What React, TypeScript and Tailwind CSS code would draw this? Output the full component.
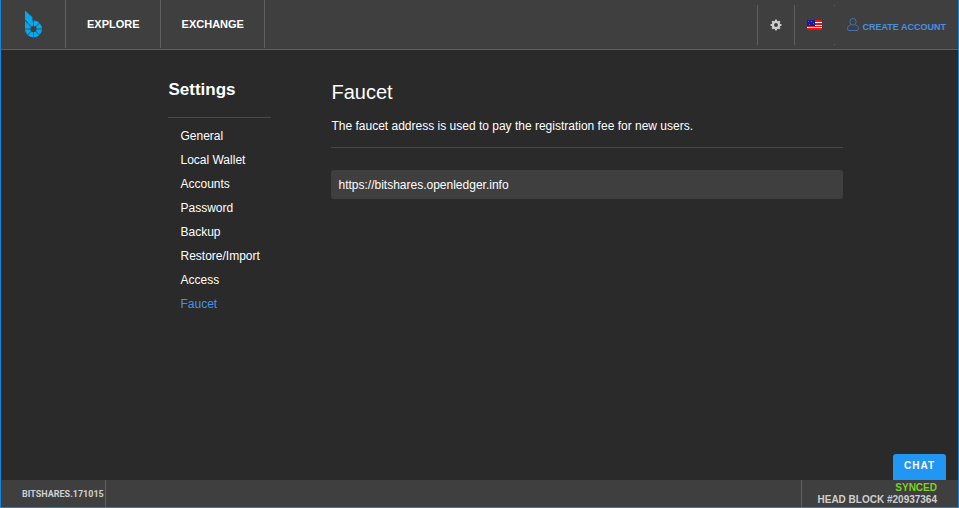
const FONT = 'font-["Liberation_Sans",Arial,sans-serif]';

const MENU = ["General", "Local Wallet", "Accounts", "Password", "Backup", "Restore/Import", "Access", "Faucet"];

function Logo() {
  const cuts = Array.from({ length: 8 }, (_, i) => i * 45);
  return (
    <svg width="19" height="28" viewBox="0 0 19 28" role="img" aria-label="BitShares">
      <path d="M1 0.5 L8.4 7.2 V12.5 L6.2 14 L1 9.8 Z" fill="#00a9f0" />
      <path d="M1 11 L5.5 14.7 L4.2 18 H1 Z" fill="#00a9f0" />
      <circle cx="9.5" cy="19" r="5.8" fill="none" stroke="#00a9f0" strokeWidth="5.4" />
      {cuts.map((a) => (
        <line key={a} x1="9.5" y1="19" x2="9.5" y2="10.2" stroke="#3f3f3f" strokeWidth="0.8" transform={`rotate(${a} 9.5 19)`} />
      ))}
    </svg>
  );
}

function Gear() {
  const teeth = Array.from({ length: 8 }, (_, i) => i * 45);
  return (
    <svg width="12" height="12" viewBox="0 0 12 12" aria-hidden="true">
      <circle cx="6" cy="6" r="3.1" fill="none" stroke="#d0d0d0" strokeWidth="2.3" />
      {teeth.map((a) => (
        <rect key={a} x="5" y="0.6" width="2" height="2" fill="#d0d0d0" transform={`rotate(${a} 6 6)`} />
      ))}
    </svg>
  );
}

function Flag() {
  return (
    <svg width="15" height="10" viewBox="0 0 15 10" shapeRendering="crispEdges" aria-hidden="true">
      <rect width="15" height="10" fill="#fff" />
      <rect width="15" height="2" fill="#fb0b0b" />
      <rect y="3" width="15" height="2" fill="#fb0b0b" />
      <rect y="6" width="15" height="1" fill="#fb0b0b" />
      <rect y="8" width="15" height="2" fill="#fb0b0b" />
      <rect width="8" height="6" fill="#1b1b9a" />
      <path d="M1 1h1v1h-1z M4 1h1v1h-1z M6 3h1v1h-1z M2 4h1v1h-1z" fill="#6262c0" />
    </svg>
  );
}

function Person() {
  return (
    <svg width="12" height="13" viewBox="0 0 12 13" fill="none" stroke="#3e74b4" strokeWidth="1" aria-hidden="true">
      <rect x="3" y="0.5" width="6" height="6.5" rx="2.8" />
      <path d="M3.7 7 C1.5 7.5 0.5 8.5 0.5 10.5 Q0.5 12.5 2 12.5 H10 Q11.5 12.5 11.5 10.5 C11.5 8.5 10.5 7.5 8.3 7" />
    </svg>
  );
}

export default function App() {
  return (
    <div className={`flex min-h-screen flex-col border-x border-b border-[#1784dc] bg-[#2a2a2a] text-xs text-white ${FONT}`}>
      <header className="flex h-[50px] justify-between border-b border-[#606060] bg-[#3f3f3f]">
        <nav className="flex h-12 text-[11px] font-bold">
          <a href="#home" className="flex w-[65px] items-center justify-center border-r border-[#606060]">
            <Logo />
          </a>
          <a href="#explore" className="flex items-center border-r border-[#606060] pr-5 pl-[21px]">EXPLORE</a>
          <a href="#exchange" className="flex items-center border-r border-[#606060] pr-5 pl-[21px]">EXCHANGE</a>
        </nav>
        <div className="flex h-10 self-center">
          <button type="button" aria-label="Settings" className="flex w-[38px] items-center justify-center border-x border-[#606060]">
            <Gear />
          </button>
          <button type="button" aria-label="Language: English" className="flex w-[39px] items-center justify-center">
            <Flag />
          </button>
          <span aria-hidden="true" className="flex w-px flex-col justify-between">
            <span className="h-px bg-[#606060]" />
            <span className="h-px bg-[#606060]" />
          </span>
          <a href="#create-account" className="flex items-center gap-1 px-3 text-[9px] font-bold text-[#4a90e2]">
            <Person />
            <span className="pt-1">CREATE ACCOUNT</span>
          </a>
        </div>
      </header>

      <main className="flex flex-1 gap-[60px] pt-7 pr-[12%] pl-[17.5%]">
        <aside className="w-[103px] shrink-0">
          <h1 className="text-[17px] leading-6 font-bold">Settings</h1>
          <hr className="mt-[15px] border-[#484848]" />
          <ul className="mt-[6px] pl-3">
            {MENU.map((item) => (
              <li key={item} className="h-6 leading-6">
                <a
                  href={`#${item}`}
                  aria-current={item === "Faucet" ? "page" : undefined}
                  className={item === "Faucet" ? "text-[#4a90e2]" : "text-white"}
                >
                  {item}
                </a>
              </li>
            ))}
          </ul>
        </aside>
        <section className="min-w-0 flex-1">
          <h2 className="text-[20px] leading-7">Faucet</h2>
          <p className="mt-2 leading-6">The faucet address is used to pay the registration fee for new users.</p>
          <hr className="mt-[9px] border-[#484848]" />
          <input
            type="text"
            aria-label="Faucet address"
            defaultValue="https://bitshares.openledger.info"
            className="mt-[22px] block h-[29px] w-full rounded-[3px] bg-[#3f3f3f] px-[7px] text-xs text-white outline-none"
          />
        </section>
      </main>

      <div className="flex justify-end pr-3">
        <button type="button" className="h-[26px] rounded-t-[3px] bg-[#2196f3] px-[11px] pb-[2px] text-[10px] font-bold tracking-[1px] text-white">
          CHAT
        </button>
      </div>
      <footer className="flex h-[27px] justify-between bg-[#3f3f3f] font-bold text-[#cfcfcf]">
        <div className="flex items-center border-r border-[#606060] pr-px pl-[21px] font-[Roboto,sans-serif] text-[9px]">
          BITSHARES.171015
        </div>
        <div className="border-l border-[#606060] pt-[2px] pr-[21px] pl-4 text-right text-[10px] leading-3">
          <div className="text-[#7ed321]">SYNCED</div>
          <div>HEAD BLOCK #20937364</div>
        </div>
      </footer>
    </div>
  );
}
